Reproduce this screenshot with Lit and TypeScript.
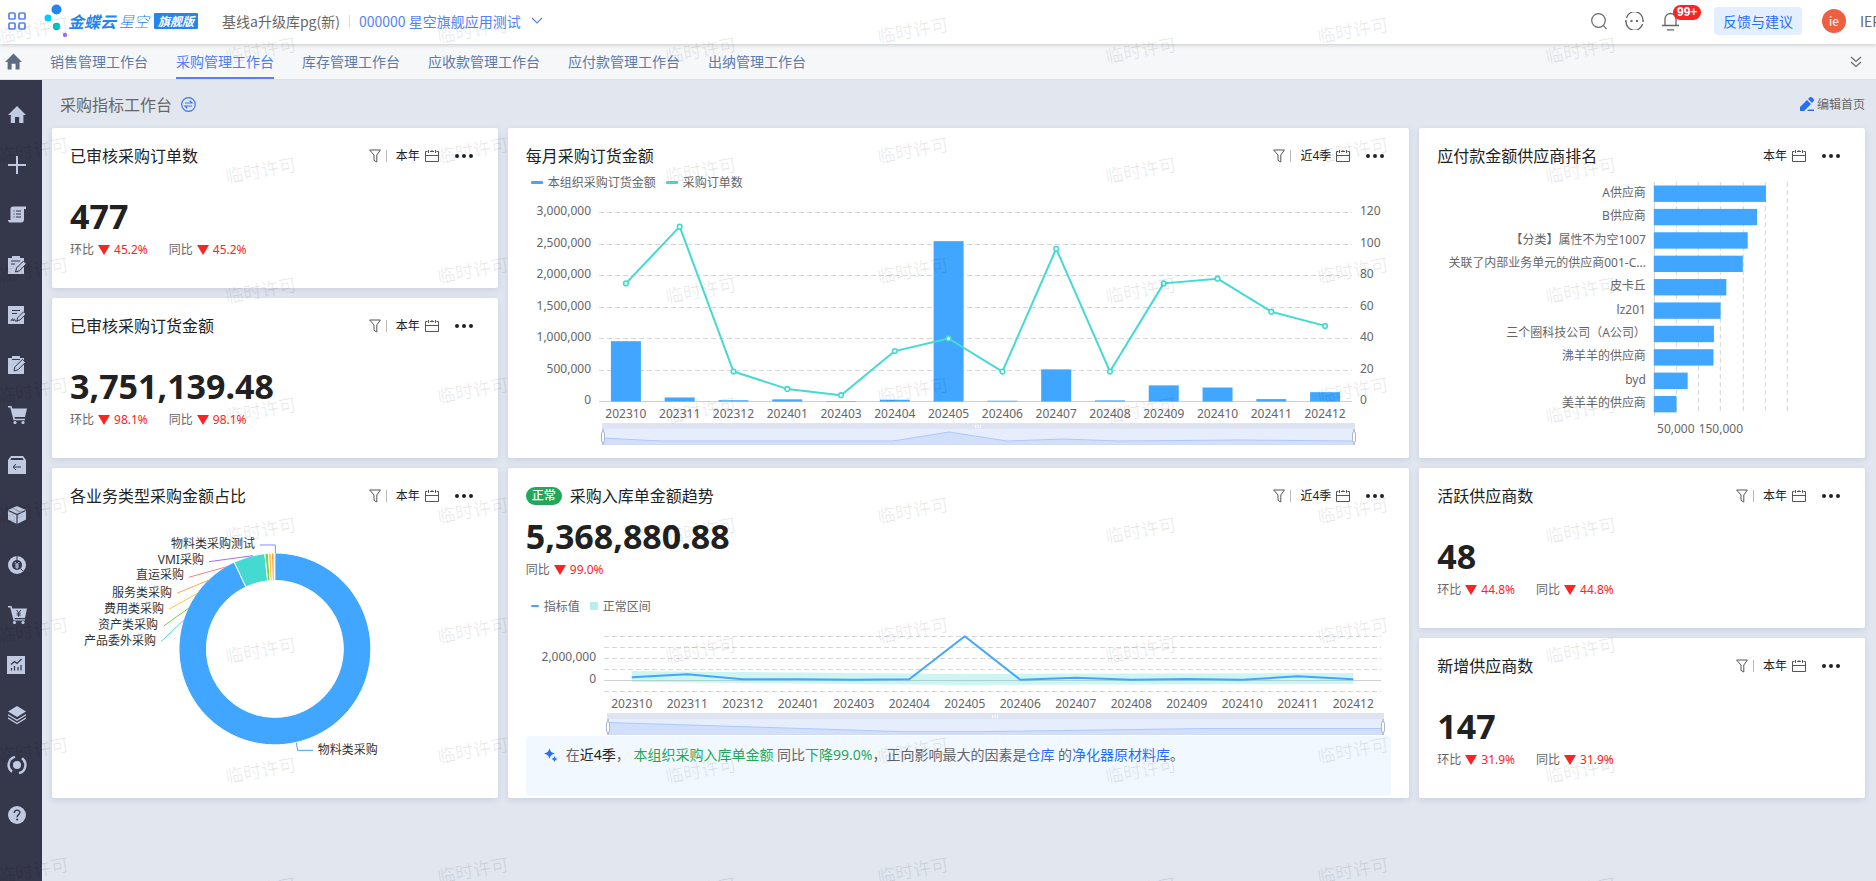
import { LitElement, html, svg, css, nothing } from "lit";
import { customElement, property } from "lit/decorators.js";
import { classMap } from "lit/directives/class-map.js";

const BLUE = "#41a6ff";
const TEAL = "#45dad1";

const MONTHS = [
  "202310", "202311", "202312", "202401", "202403", "202404", "202405",
  "202406", "202407", "202408", "202409", "202410", "202411", "202412",
];

const reset = css`
  * { box-sizing: border-box; }
  button {
    font: inherit;
    color: inherit;
    background: none;
    border: 0;
    padding: 0;
    cursor: pointer;
  }
  a { color: inherit; text-decoration: none; }
  svg { display: block; flex: none; }
`;

/* ---------- small icons ---------- */

const filterIcon = html`<svg width="12" height="14" viewBox="0 0 12 14" fill="none" stroke="#555" stroke-width="1">
  <path d="M.6 1h10.8L7.8 6v7L5 11.4V6z" />
</svg>`;

const calendarIcon = html`<svg width="14" height="14" viewBox="0 0 14 14" fill="none" stroke="#555" stroke-width="1">
  <path d="M2.500 2.500h-2v10h13v-10h-2M5 2.500h4M.5 6.500h13M3.500 1v3M10.500 1v3M7 1v2" />
</svg>`;

const moreIcon = html`<svg width="18" height="6" viewBox="0 0 18 6" fill="#222">
  <circle cx="2" cy="3" r="2" /><circle cx="9" cy="3" r="2" /><circle cx="16" cy="3" r="2" />
</svg>`;

const INK = "#35374a";
const navIcons = [
  { name: "首页", art: svg`<path d="M9 0 18 9h-2.600v8h-4.200v-6H7v6H2.800V9H0z"/>` },
  { name: "新增", art: svg`<path d="M8 0h2v8h8v2h-8v8H8v-8H0V8h8z"/>` },
  { name: "单据", art: svg`<path d="M5 .5h13V3h-2v10.500c0 2-1 3-3 3H2C.8 16.500 0 15.500 0 14h2.500V3C2.500 1.500 3.500.5 5 .5z"/><path d="M5.500 5h1M8 5h5M5.500 8h1M8 8h5M5.500 11h1M8 11h5" stroke="${INK}" fill="none"/>` },
  { name: "计划", art: svg`<path d="M0 2h4V0h8v2h4v16H0z"/><path d="M3 5h9M3 8h4" stroke="${INK}" fill="none"/><path d="m7.500 16 1-4 7-7 2.800 2.800-7 7z" stroke="${INK}"/>` },
  { name: "合同", art: svg`<path d="M0 0h16v18H0z"/><path d="M4 4.500h8M4 7.500h5M3 15c1-3 2-3 2 0 1-3 2-2 2 0h3" stroke="${INK}" fill="none"/><path d="m9 14.500.6-2.700 6-6 2.300 2.300-6 6z" stroke="${INK}"/>` },
  { name: "申请", art: svg`<path d="M0 2h4V0h8v2h4v16H0z"/><path d="M4 3.500h8" stroke="${INK}"/><path d="m6 15 1-4.200 7.500-7.500 3 3-7.500 7.500z" stroke="${INK}"/>` },
  { name: "采购", art: svg`<path d="M0 0h3.500l.8 2.500H19L17 11H6.500l.4 1.700H17v1.600H5.500L2.300 1.600H0z"/><circle cx="7" cy="16.500" r="1.600"/><circle cx="15" cy="16.500" r="1.600"/>` },
  { name: "退货", art: svg`<path d="M3 0h12l3 4v14H0V4z"/><path d="M3.500 2h11l1.200 2H2.300z" fill="${INK}"/><path d="M13 11H5M8 8l-3 3 3 3" stroke="${INK}" fill="none"/>` },
  { name: "库存", art: svg`<path d="m9 0 9 4v9.500L9 18l-9-4.500V4z"/><path d="M.5 4.500 9 8.500l8.500-4M9 8.500V18" stroke="${INK}" fill="none" stroke-width="1.200"/><path d="M5 2.500l8.500 4" stroke="#8b93aa" fill="none"/>` },
  { name: "成本", art: svg`<circle cx="9" cy="9" r="9"/><circle cx="9" cy="9" r="5" fill="${INK}"/><path d="M6.800 6 9 8.500 11.200 6M9 8.500V13M7 9h4M7 11h4" stroke="#c0cae0" fill="none"/><path d="M9 0v4M12.500 12.500l3 3" stroke="${INK}" fill="none"/>` },
  { name: "应付", art: svg`<path d="M0 0h3.500l.8 2.500H19L17 12H6.500l.4 1.200H17v1.400H5.500L2.300 1.600H0z"/><circle cx="6.500" cy="16.500" r="1.600"/><circle cx="15" cy="16.500" r="1.600"/><path d="m8.500 4 2.200 2.600L13 4M10.700 6.600v4.200M8.700 7.200h4M8.700 9h4" stroke="${INK}" fill="none"/>` },
  { name: "报表", art: svg`<path d="M-1 0h18v18H-1z"/><path d="M3 8.500 6.500 5.500l2.500 2L13.500 3M3.500 14.500V12M6.500 14.500V10M10 14.500V11M13 14.500V9" stroke="${INK}" fill="none" stroke-width="1.200"/>` },
  { name: "基础资料", art: svg`<path d="m9 0 9 5.500L9 11 0 5.500zM0 8l9 5.500L18 8v1.400L9 15 0 9.400zM0 11.300l9 5.500 9-5.500v1.400l-9 5.500-9-5.500z"/>` },
  { name: "协同", art: svg`<circle cx="9" cy="9" r="4"/><path d="M7 .8A8.400 8.400 0 0 0 4 15.700M11 17.200A8.400 8.400 0 0 0 14 2.300" stroke="#c0cae0" stroke-width="2.400" fill="none"/>` },
  { name: "帮助", art: svg`<circle cx="9" cy="9" r="9"/><path d="M6.300 7c0-3.800 5.500-3.600 5.500-.4 0 2-2.700 2.100-2.700 4.600" stroke="${INK}" stroke-width="1.400" fill="none"/><circle cx="9.100" cy="13.600" r="1" fill="${INK}"/>` },
];

/* ---------- card frame ---------- */

@customElement("dash-card")
class DashCard extends LitElement {
  @property() heading = "";
  @property() period = "本年";
  @property() status = "";
  @property({ type: Boolean }) filterable = false;

  static styles = [
    reset,
    css`
      :host {
        display: flex;
        flex-direction: column;
        min-width: 0;
        background: #fff;
        border-radius: 2px;
        box-shadow: 0 2px 6px rgba(80, 105, 150, 0.16);
        overflow: hidden;
      }
      .head {
        display: flex;
        align-items: center;
        height: 44px;
        padding: 12px 25px 0 18px;
      }
      .status {
        height: 18px;
        padding: 0 6px;
        margin-right: 8px;
        border-radius: 9px;
        background: #21a858;
        color: #fff;
        font-size: 12px;
        font-weight: 500;
        line-height: 18px;
      }
      .title {
        flex: 1;
        margin: 0;
        font-size: 16px;
        font-weight: 400;
        line-height: 24px;
        color: #212121;
        white-space: nowrap;
      }
      .tools {
        display: flex;
        align-items: center;
        font-size: 12px;
        line-height: 18px;
        color: #212121;
      }
      .bar {
        width: 1px;
        height: 12px;
        margin: 0 9px 0 5px;
        background: #b8b8b8;
      }
      .period { display: flex; align-items: center; gap: 5px; }
      .more { margin-left: 16px; }
    `,
  ];

  render() {
    return html`
      <header class="head">
        ${this.status ? html`<span class="status">${this.status}</span>` : nothing}
        <h2 class="title">${this.heading}</h2>
        <div class="tools">
          ${this.filterable
            ? html`<button aria-label="筛选">${filterIcon}</button><span class="bar"></span>`
            : nothing}
          <button class="period"><span>${this.period}</span>${calendarIcon}</button>
          <button class="more" aria-label="更多">${moreIcon}</button>
        </div>
      </header>
      <slot></slot>
    `;
  }
}

/* ---------- big figure with comparisons ---------- */

@customElement("kpi-figure")
class KpiFigure extends LitElement {
  @property() value = "";
  @property({ attribute: false }) changes: [string, string][] = [];

  static styles = [
    reset,
    css`
      :host { display: block; padding: 0 18px; }
      .value {
        font-size: 34px;
        font-weight: 700;
        line-height: 48px;
        color: #212121;
      }
      .changes {
        display: flex;
        gap: 21px;
        font-size: 12px;
        line-height: 20px;
        color: #666;
      }
      .change { display: flex; align-items: center; gap: 4px; }
      .pct { color: #fb2323; }
    `,
  ];

  render() {
    return html`
      <div class="value">${this.value}</div>
      <div class="changes">
        ${this.changes.map(
          ([label, pct]) => html`<span class="change">
            <span>${label}</span>
            <svg width="12" height="10" viewBox="0 0 12 10"><path d="M0 0h12L6 10z" fill="#fb2323" /></svg>
            <span class="pct">${pct}</span>
          </span>`,
        )}
      </div>
    `;
  }
}

/* ---------- charts ---------- */

const chartStyles = css`
  :host { display: block; min-width: 0; }
  .plot { width: 100%; overflow: visible; }
  text { font-size: 12px; fill: #666; }
  .dark { fill: #333; }
  .end { text-anchor: end; }
  .mid { text-anchor: middle; }
  .grid { stroke: #d6d6d6; stroke-width: 1; stroke-dasharray: 5 3; }
  .axis { stroke: #d0d0d0; stroke-width: 1; }
  .legend {
    display: flex;
    align-items: center;
    gap: 10px;
    height: 20px;
    padding-left: 23px;
    font-size: 12px;
    color: #666;
  }
  .legend.roomy { height: 24px; }
  .key { display: flex; align-items: center; gap: 5px; }
  .mark { width: 12px; height: 3px; border-radius: 1px; background: #41a6ff; }
  .mark.teal { background: #45dad1; }
  .mark.short { width: 8px; height: 2px; }
  .mark.square { width: 8px; height: 8px; background: #b5f0ec; }
`;

const zoomBar = (x: number, y: number, w: number, trend: [number, number][]) => {
  const line = trend.map(([px, py]) => `${px},${py}`).join(" ");
  const first = trend[0][0];
  const last = trend[trend.length - 1][0];
  const handle = (hx: number) => svg`
    <path d="M${hx} ${y + 6}v16" stroke="#acb8d1" stroke-width="1.500" />
    <rect x=${hx - 1.5} y=${y + 9} width="3" height="10" rx="1" fill="#fff" stroke="#acb8d1" />`;
  return svg`
    <rect x=${x} y=${y} width=${w} height="22" fill="#e6edfd" />
    <polygon points="${first},${y + 22} ${line} ${last},${y + 22}" fill="#d2dffc" />
    <polyline points=${line} fill="none" stroke="#adc8fa" />
    <rect x=${x} y=${y} width=${w} height="6" fill="#dfe4f2" />
    <path d="M${x + w / 2 - 3} ${y + 2}v3m2.500-3v3m2.500-3v3" stroke="#fff" />
    <path d="M${x} ${y + 21.5}h${w}" stroke="#d3dcf0" />
    ${handle(x + 1)}${handle(x + w - 1)}`;
};

@customElement("order-chart")
class OrderChart extends LitElement {
  static styles = [reset, chartStyles];

  private amounts = [957, 64, 20, 34, 8, 28, 2545, 12, 510, 18, 256, 222, 38, 148];
  private counts = [75, 111, 19, 8, 4, 32, 40, 19, 97, 19, 75, 78, 57, 48];

  render() {
    const left = 91;
    const step = 753 / 14;
    const base = 209.5;
    const cx = (i: number) => left + step * (i + 0.5);
    const cy = (n: number) => base - n * 1.575;
    return html`
      <div class="legend">
        <span class="key"><i class="mark"></i>本组织采购订货金额</span>
        <span class="key"><i class="mark teal"></i>采购订单数</span>
      </div>
      <svg class="plot" height="260" viewBox="0 0 901 260" preserveAspectRatio="xMinYMin meet">
        ${[0, 1, 2, 3, 4, 5, 6].map((k) => {
          const y = Math.floor(base - k * 31.5) + 0.5;
          return svg`
            <line class=${k ? "grid" : "axis"} x1=${left} x2=${left + 753} y1=${y} y2=${y} />
            <text class="end" x="83" y=${y + 2.5}>${(k * 500000).toLocaleString("en-US")}</text>
            <text x="852" y=${y + 2.5}>${k * 20}</text>`;
        })}
        ${this.amounts.map((v, i) => {
          const h = (v / 3000) * 189;
          return svg`<rect x=${cx(i) - 15} y=${base - h} width="30" height=${h} fill=${BLUE} />`;
        })}
        <polyline points=${this.counts.map((n, i) => `${cx(i)},${cy(n)}`).join(" ")}
          fill="none" stroke=${TEAL} stroke-width="2" stroke-linejoin="round" />
        ${this.counts.map(
          (n, i) => svg`<circle cx=${cx(i)} cy=${cy(n)} r="2.300" fill="#fff" stroke=${TEAL} stroke-width="1.600" />`,
        )}
        ${MONTHS.map((m, i) => svg`<text class="mid" x=${cx(i)} y="226">${m}</text>`)}
        ${zoomBar(94, 231, 753, [
          [94, 246], [153, 249], [385, 249], [441, 240], [499, 249], [556, 247], [610, 249], [730, 248], [847, 249],
        ])}
      </svg>
    `;
  }
}

@customElement("supplier-chart")
class SupplierChart extends LitElement {
  static styles = [reset, chartStyles];

  private rows: [string, number][] = [
    ["A供应商", 252], ["B供应商", 232], ["【分类】属性不为空1007", 211],
    ["关联了内部业务单元的供应商001-C...", 200], ["皮卡丘", 163], ["lz201", 150],
    ["三个圈科技公司（A公司）", 135], ["沸羊羊的供应商", 134], ["byd", 76], ["美羊羊的供应商", 51],
  ];

  render() {
    const left = 235;
    return html`
      <svg class="plot" height="270" viewBox="0 0 446 270" preserveAspectRatio="xMinYMin meet">
        ${[1, 2, 3, 4, 5, 6].map((k) => {
          const x = Math.floor(235 + k * 22.25) + 0.5;
          return svg`<line class="grid" x1=${x} x2=${x} y1="10" y2="242" />`;
        })}
        <line class="axis" x1=${left + 0.5} x2=${left + 0.5} y1="10" y2="244" />
        ${this.rows.map(([name, v], i) => {
          const y = 21.7 + i * 23.4;
          return svg`
            <rect x=${left} y=${y - 8.2} width=${v * 0.445} height="16.400" fill=${BLUE} />
            <text class="end" x="227" y=${Math.round(y + 3)}>${name}</text>`;
        })}
        <text class="mid" x="257" y="261">50,000</text>
        <text class="mid" x="302" y="261">150,000</text>
      </svg>
    `;
  }
}

@customElement("category-chart")
class CategoryChart extends LitElement {
  static styles = [reset, chartStyles];

  private slices: [number, number, string][] = [
    [0, 334.9, BLUE], [334.9, 354, TEAL], [354, 356.1, "#6fd63f"],
    [356.1, 357.9, "#ffc640"], [357.9, 359.5, "#ffa64d"],
  ];
  private tags: [string, number, number, string, string][] = [
    ["物料类采购测试", 203, 36, "M208 33h15.500v8", "#8090fa"],
    ["VMI采购", 152, 52, "M157 49.700l44-6", "#a56ce8"],
    ["直运采购", 132, 67, "M137 65.300l38-10.600", "#f97c88"],
    ["服务类采购", 120, 85, "M125 81.300l33-13.600", "#ffa64d"],
    ["费用类采购", 112, 101, "M117 97.300l28-15.600", "#ffc640"],
    ["资产类采购", 106, 117, "M112 114l25-18", "#6fd63f"],
    ["产品委外采购", 104, 133, "M109 129.700l23-21.700", TEAL],
  ];

  private ring(a: number, b: number) {
    const at = (r: number, deg: number) => {
      const t = (deg * Math.PI) / 180;
      return `${(223 + r * Math.sin(t)).toFixed(2)} ${(137 - r * Math.cos(t)).toFixed(2)}`;
    };
    const big = b - a > 180 ? 1 : 0;
    return `M${at(96, a)}A96 96 0 ${big} 1 ${at(96, b)}L${at(68.5, b)}A68.5 68.5 0 ${big} 0 ${at(68.5, a)}z`;
  }

  render() {
    return html`
      <svg class="plot" height="280" viewBox="0 0 446 280" preserveAspectRatio="xMinYMin meet">
        ${this.slices.map(([a, b, c]) => svg`<path d=${this.ring(a, b)} fill=${c} stroke="#fff" />`)}
        ${this.tags.map(
          ([name, x, y, d, c]) => svg`
            <path d=${d} fill="none" stroke=${c} />
            <text class="end dark" x=${x} y=${y}>${name}</text>`,
        )}
        <path d="M244.500 231l1.300 7.500h15.500" fill="none" stroke=${BLUE} />
        <text class="dark" x="266" y="242">物料类采购</text>
      </svg>
    `;
  }
}

@customElement("trend-chart")
class TrendChart extends LitElement {
  static styles = [reset, chartStyles];

  private line = [59.3, 56.3, 61.3, 61.3, 61.7, 61.3, 18.3, 61.7, 59.7, 61.7, 61, 61.7, 58.3, 61.3];

  render() {
    const left = 96;
    const step = 777 / 14;
    const cx = (i: number) => left + step * (i + 0.5);
    return html`
      <div class="legend roomy">
        <span class="key"><i class="mark short"></i>指标值</span>
        <span class="key"><i class="mark square"></i>正常区间</span>
      </div>
      <svg class="plot" height="118" viewBox="0 0 901 118" preserveAspectRatio="xMinYMin meet">
        ${[18.5, 29.5, 40.5, 51.5, 62.5, 73.5].map(
          (y) => svg`<line class=${y === 62.5 ? "axis" : "grid"} x1=${left} x2=${left + 777} y1=${y} y2=${y} />`,
        )}
        <text class="end" x="88" y="43">2,000,000</text>
        <text class="end" x="88" y="65">0</text>
        <polygon points="${cx(0)},53 ${cx(6)},56 ${cx(13)},55 ${cx(13)},66 ${cx(6)},67 ${cx(0)},64"
          fill=${TEAL} fill-opacity="0.260" />
        <polyline points=${this.line.map((y, i) => `${cx(i)},${y}`).join(" ")}
          fill="none" stroke=${BLUE} stroke-width="2" stroke-linejoin="round" />
        ${MONTHS.map((m, i) => svg`<text class="mid" x=${cx(i)} y="90">${m}</text>`)}
        ${zoomBar(99, 95, 777, [[99, 104.5], [397, 113.7], [470, 113.7], [700, 110.5], [876, 110.5]])}
      </svg>
    `;
  }
}

/* ---------- page ---------- */

@customElement("app-root")
class AppRoot extends LitElement {
  private tabs = [
    "销售管理工作台", "采购管理工作台", "库存管理工作台",
    "应收款管理工作台", "应付款管理工作台", "出纳管理工作台",
  ];

  static styles = [
    reset,
    css`
      :host {
        position: relative;
        display: flex;
        flex-direction: column;
        min-height: 100vh;
        overflow: hidden;
        background: #e1e6ef;
        font-family: "Noto Sans", "Noto Sans CJK SC", sans-serif;
        font-size: 14px;
        color: #666;
      }

      .top {
        z-index: 1;
        display: flex;
        align-items: center;
        height: 44px;
        padding: 0 0 2px 8px;
        background: #fff;
        box-shadow: 0 1px 4px rgba(0, 0, 0, 0.2);
        font-family: "Noto Sans CJK SC", sans-serif;
        line-height: 20px;
        white-space: nowrap;
      }
      .brand { display: flex; align-items: center; margin-left: 18px; }
      .name {
        font-size: 16px;
        font-style: italic;
        font-weight: 700;
        color: #2485ee;
      }
      .name.thin { margin: 0 5px 0 3px; font-weight: 300; font-size: 15px; }
      .edition {
        height: 16px;
        padding: 0 4px;
        border-radius: 1px;
        background: #2485ee;
        color: #fff;
        font-size: 12px;
        font-style: italic;
        font-weight: 700;
        line-height: 16px;
      }
      .org { margin-left: 24px; }
      .split { width: 1px; height: 12px; margin: 0 9px; background: #ddd; }
      .tenant { display: flex; align-items: center; gap: 10px; color: #5582f3; }
      .actions { display: flex; align-items: center; margin-left: auto; }
      .search { margin-right: 18px; }
      .chat { margin-right: 18px; }
      .bell { position: relative; margin-right: 35px; }
      .count {
        position: absolute;
        left: 11px;
        top: -6px;
        height: 15px;
        padding: 0 4px;
        border-radius: 8px;
        background: #fb2323;
        color: #fff;
        font: 700 12px/15px "Liberation Sans", sans-serif;
      }
      .feedback {
        height: 28px;
        padding: 0 9px;
        margin-right: 20px;
        border-radius: 4px;
        background: #e3efff;
        color: #276ff5;
      }
      .avatar {
        width: 24px;
        height: 24px;
        margin-right: 14px;
        border-radius: 12px;
        background: #ee5f41;
        color: #fff;
        font-size: 12px;
        line-height: 24px;
        text-align: center;
      }
      .user { width: 16px; overflow: hidden; }

      .tabs {
        display: flex;
        align-items: stretch;
        gap: 28px;
        height: 36px;
        padding: 0 14px 0 5px;
        border-bottom: 1px solid #dcdfe4;
        background: #f5f7f9;
        line-height: 36px;
        color: #5f7aa8;
        white-space: nowrap;
      }
      .home { display: flex; align-items: center; }
      .tab.active { color: #4f7df2; box-shadow: inset 0 -2px #5582f3; }
      .fold { margin-left: auto; }

      .body { display: flex; flex: 1; }
      .side {
        display: flex;
        flex-direction: column;
        width: 42px;
        padding: 10px 0 0 8px;
        background: #35374a;
      }
      .side-link { display: flex; align-items: center; height: 50px; }
      .side-link svg { overflow: visible; fill: #c0cae0; }

      .page { flex: 1; min-width: 0; padding: 0 11px 20px 10px; }
      .page-head {
        display: flex;
        align-items: center;
        height: 48px;
        padding-left: 8px;
      }
      .page-title { margin: 0 9px 0 0; font-size: 16px; font-weight: 400; }
      .edit {
        display: flex;
        align-items: center;
        gap: 3px;
        margin-left: auto;
        font-size: 12px;
      }
      .cards {
        display: grid;
        grid-template-columns: repeat(4, minmax(0, 1fr));
        grid-template-rows: repeat(4, 160px);
        gap: 10px;
      }
      .wide { grid-column: span 2; }
      .tall { grid-row: span 2; }
      .low { margin-top: 20px; }

      .insight {
        display: flex;
        align-items: flex-start;
        gap: 8px;
        height: 60px;
        margin: 0 18px;
        padding: 9px 18px;
        border-radius: 4px;
        background: #f2f8ff;
        line-height: 20px;
      }
      .insight svg { margin-top: 3px; }
      .insight p { margin: 0; }
      .strong { color: #212121; }
      .good { color: #21a858; }
      .link { color: #276ff5; }
      .trend { margin-top: 14px; }

      .marks {
        position: absolute;
        inset: 0;
        z-index: 2;
        display: grid;
        grid-template-columns: repeat(auto-fill, 228px 212px);
        grid-template-rows: repeat(8, 120px);
        overflow: hidden;
        pointer-events: none;
      }
      .mark {
        justify-self: start;
        align-self: start;
        margin: 18px 0 0 -3px;
        font-size: 18px;
        line-height: 24px;
        color: rgba(0, 0, 0, 0.09);
        transform: rotate(-10deg);
        white-space: nowrap;
      }
      .mark.shifted { margin-top: 38px; }
    `,
  ];

  private renderTop() {
    return html`
      <header class="top">
        <button aria-label="应用">
          <svg width="18" height="18" viewBox="0 0 18 18" fill="none" stroke="#5582f3" stroke-width="1.700">
            <rect x="1" y="1" width="6" height="6" rx="1" /><rect x="11" y="1" width="6" height="6" rx="1" />
            <rect x="1" y="11" width="6" height="6" rx="1" /><rect x="11" y="11" width="6" height="6" rx="1" />
          </svg>
        </button>
        <div class="brand">
          <svg width="24" height="34" viewBox="0 0 24 34">
            <circle cx="12.500" cy="5.500" r="5" fill="#2485ee" />
            <circle cx="4" cy="14" r="3.500" fill="#00cdfd" />
            <circle cx="12.500" cy="22.500" r="3.700" fill="#0ac5bd" />
            <circle cx="21" cy="31" r="2.200" fill="#a06bff" />
          </svg>
          <span class="name">金蝶云</span><span class="name thin">星空</span>
          <span class="edition">旗舰版</span>
        </div>
        <span class="org">基线a升级库pg(新)</span>
        <span class="split"></span>
        <button class="tenant">
          <span>000000 星空旗舰应用测试</span>
          <svg width="12" height="8" viewBox="0 0 12 8" fill="none" stroke="#5582f3" stroke-width="1.200">
            <path d="M1 1l5 5 5-5" />
          </svg>
        </button>
        <div class="actions">
          <button class="search" aria-label="搜索">
            <svg width="16" height="17" viewBox="0 0 16 17" fill="none" stroke="#666" stroke-width="1.200">
              <circle cx="7.500" cy="7.500" r="6.800" /><path d="M12.300 12.300l3.300 3.800" />
            </svg>
          </button>
          <button class="chat" aria-label="消息">
            <svg width="19" height="18" viewBox="0 0 19 18" fill="none" stroke="#666" stroke-width="1.300">
              <path d="M1.500 6A8.300 8.300 0 0 1 17.800 9H19.500M17.500 12A8.300 8.300 0 0 1 1.200 9H-.5" />
              <path d="M5.500 9h2M11 9h2" stroke-width="2" />
            </svg>
          </button>
          <button class="bell" aria-label="通知">
            <svg width="17" height="20" viewBox="0 0 17 20" fill="none" stroke="#666" stroke-width="1.300">
              <path d="M3 14V8a5.500 5.500 0 0 1 11 0v6M0 14.500h17M5 18.800h7" />
            </svg>
            <span class="count">99+</span>
          </button>
          <button class="feedback">反馈与建议</button>
          <span class="avatar">ie</span>
          <span class="user">IEP</span>
        </div>
      </header>
    `;
  }

  private renderTabs() {
    return html`
      <nav class="tabs">
        <a class="home" href="#" aria-label="首页">
          <svg width="17" height="17" viewBox="0 0 18 17" fill="#5d6b85">
            <path d="M9 0 18 9h-2.600v8h-4.200v-6H7v6H2.800V9H0z" />
          </svg>
        </a>
        ${this.tabs.map(
          (t, i) => html`<a class=${classMap({ tab: true, active: i === 1 })} href="#">${t}</a>`,
        )}
        <button class="fold" aria-label="展开">
          <svg width="12" height="12" viewBox="0 0 12 12" fill="none" stroke="#666" stroke-width="1.100">
            <path d="M1 1l5 4.500L11 1M1 6l5 4.500L11 6" />
          </svg>
        </button>
      </nav>
    `;
  }

  private renderCards() {
    const both = (p: string): [string, string][] => [["环比", p], ["同比", p]];
    return html`
      <main class="cards">
        <dash-card heading="已审核采购订单数" filterable>
          <kpi-figure class="low" value="477" .changes=${both("45.2%")}></kpi-figure>
        </dash-card>
        <dash-card class="wide tall" heading="每月采购订货金额" period="近4季" filterable>
          <order-chart></order-chart>
        </dash-card>
        <dash-card class="tall" heading="应付款金额供应商排名">
          <supplier-chart></supplier-chart>
        </dash-card>
        <dash-card heading="已审核采购订货金额" filterable>
          <kpi-figure class="low" value="3,751,139.48" .changes=${both("98.1%")}></kpi-figure>
        </dash-card>
        <dash-card class="tall" heading="各业务类型采购金额占比" filterable>
          <category-chart></category-chart>
        </dash-card>
        <dash-card class="wide tall" status="正常" heading="采购入库单金额趋势" period="近4季" filterable>
          <kpi-figure value="5,368,880.88" .changes=${[["同比", "99.0%"]]}></kpi-figure>
          <trend-chart class="trend"></trend-chart>
          <div class="insight">
            <svg width="14" height="15" viewBox="0 0 14 15" fill="#276ff5">
              <path d="M5.500 0Q6 4.500 11 5.500 6 6.500 5.500 11 5 6.500 0 5.500 5 4.500 5.500 0zM10.500 8q.4 2.500 3 3-2.600.5-3 3-.4-2.500-3-3 2.600-.5 3-3z" />
            </svg>
            <p>在<span class="strong">近4季</span>， <span class="good">本组织采购入库单金额</span> 同比<span class="good">下降99.0%</span>，正向影响最大的因素是<a class="link" href="#">仓库</a> 的<a class="link" href="#">净化器原材料库</a>。</p>
          </div>
        </dash-card>
        <dash-card heading="活跃供应商数" filterable>
          <kpi-figure class="low" value="48" .changes=${both("44.8%")}></kpi-figure>
        </dash-card>
        <dash-card heading="新增供应商数" filterable>
          <kpi-figure class="low" value="147" .changes=${both("31.9%")}></kpi-figure>
        </dash-card>
      </main>
    `;
  }

  render() {
    return html`
      ${this.renderTop()} ${this.renderTabs()}
      <div class="body">
        <nav class="side">
          ${navIcons.map(
            (n) => html`<a class="side-link" href="#" aria-label=${n.name}>
              <svg width="18" height="18" viewBox="0 0 18 18">${n.art}</svg>
            </a>`,
          )}
        </nav>
        <div class="page">
          <div class="page-head">
            <h1 class="page-title">采购指标工作台</h1>
            <button aria-label="切换">
              <svg width="15" height="15" viewBox="0 0 15 15" fill="none" stroke="#3a78f2" stroke-width="1.200">
                <circle cx="7.500" cy="7.500" r="6.800" /><path d="M4 6h7L8.700 3.800M11 9H4l2.300 2.200" />
              </svg>
            </button>
            <button class="edit">
              <svg width="14" height="14" viewBox="0 0 14 14" fill="#276ff5">
                <path d="M0 14V10L7 3l4 4-7 7zM8 2l2-2q1-.5 1.800.2l2 2q.6.800 0 1.600L12 6zM7 14l1.500-1.500H14V14z" />
              </svg>
              <span>编辑首页</span>
            </button>
          </div>
          ${this.renderCards()}
        </div>
      </div>
      <div class="marks" aria-hidden="true">
        ${Array.from(
          { length: 64 },
          (_, i) => html`<span class=${classMap({ mark: true, shifted: i % 2 === 1 })}>临时许可</span>`,
        )}
      </div>
    `;
  }
}
